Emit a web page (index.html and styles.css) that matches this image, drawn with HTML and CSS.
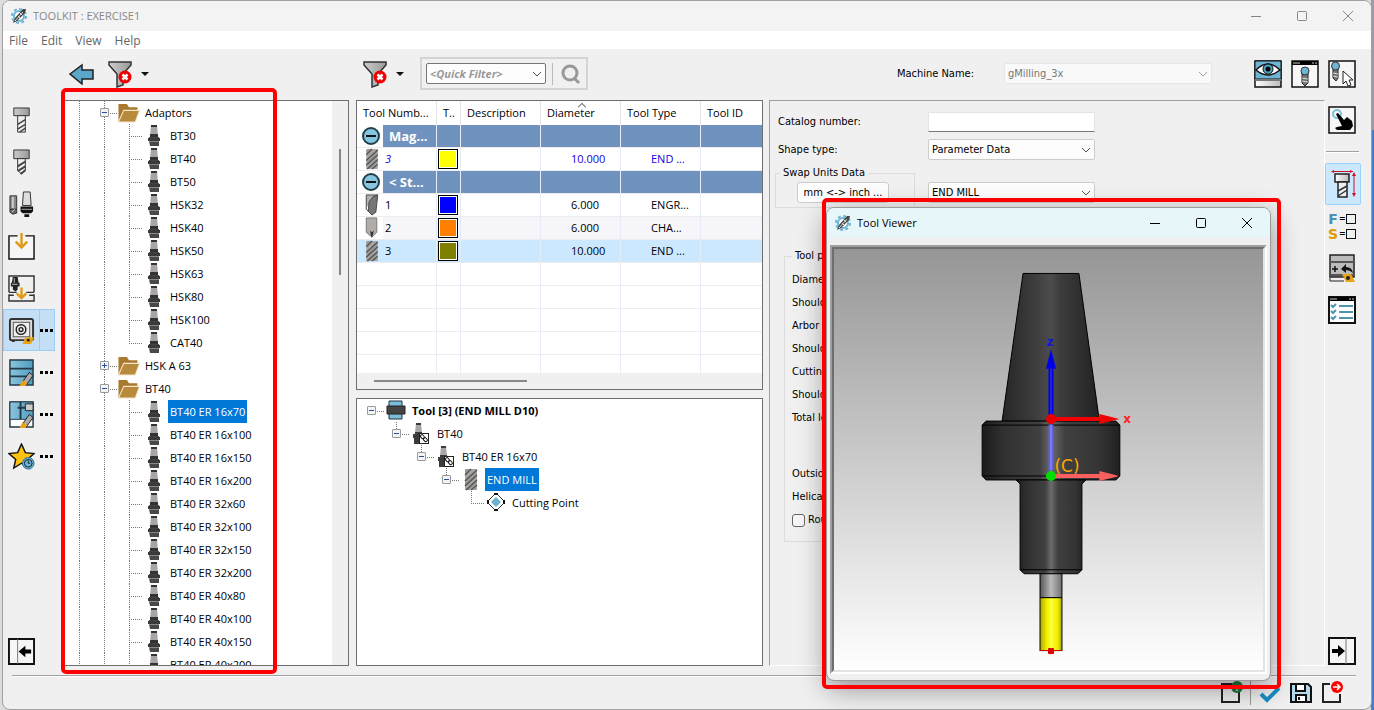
FILE: index.html
```
<!DOCTYPE html>
<html lang="en">
<head>
<meta charset="UTF-8">
<meta name="viewport" content="width=device-width, initial-scale=1.0">
<title>TOOLKIT : EXERCISE1</title>
<link rel="stylesheet" href="styles.css">
</head>
<body>

<!-- shared icons -->
<svg class="sprite" aria-hidden="true">
    <defs>
        <linearGradient id="metal"><stop offset="0" stop-color="#777"/><stop offset=".5" stop-color="#ddd"/><stop offset="1" stop-color="#888"/></linearGradient>
        <linearGradient id="lightMetal"><stop offset="0" stop-color="#ccc"/><stop offset="1" stop-color="#999"/></linearGradient>
        <linearGradient id="whiteMetal"><stop offset="0" stop-color="#fff"/><stop offset="1" stop-color="#bbb"/></linearGradient>
        <linearGradient id="blueFill"><stop offset="0" stop-color="#8cc4dc"/><stop offset="1" stop-color="#4f9dc0"/></linearGradient>
    </defs>
    <symbol id="logo" viewBox="0 0 16 16">
        <circle cx="8" cy="8" r="5" fill="#fff" stroke="#6fb3d2" stroke-width="2"/>
        <circle cx="8" cy="8" r="7" fill="none" stroke="#6fb3d2" stroke-width="2" stroke-dasharray="3 2.5"/>
        <path d="M2 15l2-5 8-9 3 0-1 4-8 8z" fill="#444"/>
        <path d="M4 13l8-9M7 8l2 2M9 5l2 2" stroke="#ddd"/>
    </symbol>
    <symbol id="folder" viewBox="0 0 22 19">
        <path d="M1 18V1h8l2 3h8v4H6z" fill="#a9792f"/>
        <path d="M1 18L6 7h15l-4 11z" fill="#b98a3c" stroke="#f3e6cc"/>
    </symbol>
    <symbol id="adaptor" viewBox="0 0 12 23">
        <path d="M3 1h6l1 11H2z" fill="#aaa5a5"/>
        <path d="M3 1h6v2H3zM2 10h8v3H2z" fill="#333"/>
        <path d="M1 13h10v4H1z" fill="#444"/>
        <path d="M0 14h12v3H0z" fill="#3a3a3a"/>
        <path d="M1 17h10v5H2z" fill="#484848"/>
        <path d="M1 17h10v1H1z" fill="#888"/>
    </symbol>
    <symbol id="adaptorLink" viewBox="0 0 18 23">
        <path d="M4 1h5l1 10H3z" fill="#aaa5a5"/>
        <path d="M4 1h5v2H4zM3 10h7v3H3zM1 12h11v4H1zM2 16h8v6H2z" fill="#3c3c3c"/>
        <rect x="7.500" y="11.500" width="9" height="10" fill="#fff" stroke="#222"/>
        <rect x="9" y="13" width="3" height="4" rx="1" fill="none" stroke="#111" transform="rotate(-40 10 15)"/>
        <rect x="12" y="16" width="3" height="4" rx="1" fill="none" stroke="#111" transform="rotate(-40 13 18)"/>
    </symbol>
    <symbol id="endmill" viewBox="0 0 14 23">
        <path d="M1 1h12v21H1z" fill="#a8a4a2"/>
        <path d="M1 7l6-6M1 13L13 2M1 18L13 7M2 22l11-10M7 22l6-5" stroke="#555" stroke-width="1.500"/>
        <path d="M1 4l3-3M1 16L13 5M4 22l9-8" stroke="#888"/>
    </symbol>
    <symbol id="engraver" viewBox="0 0 14 23">
        <path d="M1 1h12L3 12 1 14z" fill="#b5b0ae"/>
        <path d="M13 1L8 3 4 8 3 18l4 4 4-3 1-9z" fill="#777" stroke="#444"/>
        <path d="M1 1h12M1 1v15l3 3" fill="none" stroke="#444"/>
    </symbol>
    <symbol id="chamfer" viewBox="0 0 14 23">
        <path d="M1 1h11v15l-5 5-6-5z" fill="#b0acaa" stroke="#777"/>
        <path d="M5 14l2 2 2-2-2 8-1-2z" fill="#333"/>
    </symbol>
    <symbol id="collapse" viewBox="0 0 20 20">
        <circle cx="10" cy="10" r="8" fill="#86c5de" stroke="#223f4c" stroke-width="2"/>
        <path d="M5 10h10" stroke="#111" stroke-width="2"/>
    </symbol>
    <symbol id="toolHolder" viewBox="0 0 20 20">
        <path d="M3 1h13v18H3z" fill="#79bdd8" stroke="#234"/>
        <path d="M1 6h18v8H1z" fill="#444" stroke="#222"/>
    </symbol>
    <symbol id="point" viewBox="0 0 20 20">
        <path d="M10 1l9 9-9 9-9-9z" fill="#fff" stroke="#333"/>
        <path d="M10 5l5 5-5 5-5-5z" fill="#6db2cd"/>
        <path d="M8 1h4v2H8zM8 17h4v2H8zM1 8h2v4H1zM17 8h2v4h-2z" fill="#111"/>
    </symbol>
    <symbol id="funnel" viewBox="0 0 26 28">
        <path d="M2 2h22v3l-8 9v11l-6 2V14L2 5z" fill="url(#lightMetal)" stroke="#333" stroke-width="1.500"/>
        <circle cx="18" cy="17" r="6.500" fill="#f00000"/>
        <path d="M15.500 14.500l5 5M20.500 14.500l-5 5" stroke="#fff" stroke-width="2.500"/>
    </symbol>
    <symbol id="milling" viewBox="0 0 26 28">
        <path d="M5 1h16v8H5z" fill="url(#lightMetal)" stroke="#333"/>
        <path d="M9 9h8v17H9z" fill="#eee" stroke="#333"/>
        <path d="M9 18l8-5M9 23l8-5M11 26l6-4" stroke="#444" stroke-width="1.500"/>
    </symbol>
    <symbol id="drill" viewBox="0 0 26 28">
        <path d="M5 1h16v9H5z" fill="url(#lightMetal)" stroke="#333"/>
        <path d="M9 10h8v12l-4 4-4-4z" fill="#eee" stroke="#333"/>
        <path d="M9 18l8-5M9 23l8-5M12 26l5-4" stroke="#444" stroke-width="2"/>
    </symbol>
    <symbol id="holders" viewBox="0 0 26 28">
        <path d="M1 5h7v14H1z" fill="#888" stroke="#333"/>
        <path d="M4 6v12" stroke="#ccc" stroke-width="2"/>
        <path d="M1 19h7v4l-4 1-3-2z" fill="#666" stroke="#333"/>
        <path d="M3 22l3-3" stroke="#ddd"/>
        <path d="M15 1h7l1 14h-9z" fill="#ddd" stroke="#333"/>
        <path d="M12 16h13v5l-2 2h-9l-2-2zM16 24h5v3h-5z" fill="#111"/>
        <path d="M13 19h11" stroke="#aaa"/>
    </symbol>
    <symbol id="importBox" viewBox="0 0 28 28">
        <path d="M10 3H1v24h26V3h-9" fill="#f6f6f6" stroke="#111" stroke-width="1.500"/>
        <path d="M14 0v13M8 9l6 6 6-6" fill="none" stroke="#e09b1a" stroke-width="2.500"/>
    </symbol>
    <symbol id="importAdaptor" viewBox="0 0 28 28">
        <path d="M1 18V1h26v17M1 20v7h26v-7M1 18h8M19 18h8M1 21h5M22 21h5" fill="none" stroke="#333" stroke-width="1.500"/>
        <path d="M5 2h5l1 6H4zM3 8h9v4H3zM5 12h5v3l-2 2-3-2z" fill="#222"/>
        <path d="M6 3h1v5H6zM4 9h6v1H4z" fill="#bbb"/>
        <path d="M14 13v11M9 19l5 5 5-5" fill="none" stroke="#e09b1a" stroke-width="2.500"/>
    </symbol>
    <symbol id="safe" viewBox="0 0 28 28">
        <path d="M4 24h3v2H4zM18 24h4v2h-4z" fill="#333"/>
        <rect x="2" y="2" width="24" height="22" rx="2" fill="#ddd" stroke="#333" stroke-width="2"/>
        <rect x="5.500" y="5.500" width="17" height="15" fill="#eee" stroke="#555"/>
        <circle cx="13.500" cy="13" r="5" fill="none" stroke="#222" stroke-width="1.500"/>
        <circle cx="13.500" cy="13" r="2" fill="none" stroke="#222" stroke-width="1.500"/>
        <path d="M18 21h9l-3 7h-9z" fill="#e8a417"/>
        <circle cx="21" cy="24" r="1.500" fill="#222"/>
    </symbol>
    <symbol id="drawer" viewBox="0 0 28 28">
        <path d="M2 1h24v26H2z" fill="url(#blueFill)" stroke="#223b47" stroke-width="1.500"/>
        <path d="M2 10h24M2 18h24" stroke="#223b47" stroke-width="2"/>
        <path d="M22 14l4 3-7 10-4-3z" fill="#aaa" stroke="#222"/>
        <path d="M15 22l5 3-2 3h-6z" fill="#e8a417"/>
    </symbol>
    <symbol id="cabinet" viewBox="0 0 28 28">
        <path d="M2 1h24v26H2z" fill="#fff" stroke="#223b47" stroke-width="1.500"/>
        <path d="M2 1h24v18H2z" fill="url(#blueFill)" stroke="#223b47"/>
        <path d="M13 1v18M10 7h8" stroke="#223b47" stroke-width="2"/>
        <path d="M18 3h8v7h-8z" fill="#ccc" stroke="#222"/>
        <path d="M22 14l4 3-7 10-4-3z" fill="#aaa" stroke="#222"/>
        <path d="M15 22l5 3-2 3h-6z" fill="#e8a417"/>
    </symbol>
    <symbol id="star" viewBox="0 0 28 28">
        <path d="M14 1l4 9 9 1-7 6 2 9-8-5-8 5 2-9-7-6 9-1z" fill="#ffc20e" stroke="#111" stroke-width="1.500"/>
        <circle cx="21" cy="21" r="6" fill="#6fb3d2" stroke="#2b6f92"/>
        <circle cx="21" cy="21" r="4" fill="none" stroke="#123"/>
        <path d="M21 18v3h2" fill="none" stroke="#123"/>
    </symbol>
    <symbol id="panelLeft" viewBox="0 0 28 28">
        <path d="M1 1h26v26H1z" fill="#f6f6f6" stroke="#111" stroke-width="2"/>
        <path d="M10 1v26" stroke="#777"/>
        <path d="M11 14l7-6v4h6v4h-6v4z"/>
    </symbol>
    <symbol id="panelRight" viewBox="0 0 28 28">
        <path d="M1 1h26v26H1z" fill="#f6f6f6" stroke="#111" stroke-width="2"/>
        <path d="M18 1v26" stroke="#777"/>
        <path d="M17 14l-7-6v4H4v4h6v4z"/>
    </symbol>
    <symbol id="chevron" viewBox="0 0 10 10"><path d="M1 3l4 4 4-4" fill="none" stroke="#555"/></symbol>
    <symbol id="winMin" viewBox="0 0 12 12"><path d="M1 6.500h10" stroke="currentColor"/></symbol>
    <symbol id="winMax" viewBox="0 0 12 12"><rect x="1.500" y="1.500" width="9" height="9" rx="1" fill="none" stroke="currentColor"/></symbol>
    <symbol id="winClose" viewBox="0 0 12 12"><path d="M1 1l10 10M11 1L1 11" stroke="currentColor"/></symbol>
</svg>

<div class="window">
    <header class="titlebar">
        <svg class="logo"><use href="#logo"/></svg>
        <h1>TOOLKIT : EXERCISE1</h1>
        <div class="win-buttons">
            <button aria-label="Minimize"><svg><use href="#winMin"/></svg></button>
            <button aria-label="Maximize"><svg><use href="#winMax"/></svg></button>
            <button aria-label="Close"><svg><use href="#winClose"/></svg></button>
        </div>
    </header>

    <nav class="menubar">
        <a href="#">File</a>
        <a href="#">Edit</a>
        <a href="#">View</a>
        <a href="#">Help</a>
    </nav>

    <div class="toolbar">
        <div class="toolbar-left">
            <button aria-label="Back"><svg width="26" height="22" viewBox="0 0 26 22"><path d="M1 11L13 2v5h11v9H13v5z" fill="#5ba6c9" stroke="#222" stroke-width="1.500"/></svg></button>
            <button aria-label="Clear filter"><svg width="26" height="28"><use href="#funnel"/></svg><i class="caret"></i></button>
        </div>
        <div class="toolbar-middle">
            <button aria-label="Clear filter"><svg width="26" height="28"><use href="#funnel"/></svg><i class="caret"></i></button>
            <div class="quick-filter">
                <div class="select">
                    <select class="filter-select" aria-label="Quick filter"><option>&lt;Quick Filter&gt;</option></select>
                    <svg><use href="#chevron"/></svg>
                </div>
                <button class="search" aria-label="Search"><svg width="22" height="22" viewBox="0 0 22 22"><circle cx="10" cy="10" r="7" fill="none" stroke="#999" stroke-width="3"/><path d="M14 15l5 5" stroke="#999" stroke-width="3"/></svg></button>
            </div>
        </div>
        <div class="toolbar-right">
            <label for="machine">Machine Name:</label>
            <div class="select machine">
                <select id="machine" disabled><option>gMilling_3x</option></select>
                <svg><use href="#chevron"/></svg>
            </div>
            <button aria-label="Show tool"><svg width="28" height="28" viewBox="0 0 28 28">
                <path d="M1 1h26v26H1z" fill="url(#whiteMetal)" stroke="#111" stroke-width="1.500"/>
                <path d="M1 1h26v18H1z" fill="#6eb4d3" stroke="#111"/>
                <path d="M2 10Q14-2 26 10 14 20 2 10z" fill="#fff" stroke="#111" stroke-width="1.500"/>
                <circle cx="14" cy="9" r="5" fill="#4f9dc0" stroke="#111"/><circle cx="14" cy="9" r="2.500"/>
                <path d="M1 20h26" stroke="#777" stroke-width="2"/>
            </svg></button>
            <button aria-label="Tool window"><svg width="28" height="28" viewBox="0 0 28 28">
                <path d="M1 1h26v26H1z" fill="#f6f6f6" stroke="#111" stroke-width="1.500"/>
                <path d="M1 1h26v4H1z"/><path d="M2 3h7M21 3h2M24 3h2" stroke="#ccc"/>
                <path d="M11 13h6v10l-3 3-3-3z" fill="#777" stroke="#222"/>
                <circle cx="14" cy="11" r="4" fill="#6eb4d3" stroke="#333"/>
                <path d="M11 18l6 1M11 21l6 1" stroke="#ddd"/>
            </svg></button>
            <button aria-label="Pick tool"><svg width="28" height="28" viewBox="0 0 28 28">
                <path d="M1 1h26v26H1z" fill="#f6f6f6" stroke="#111" stroke-width="1.500"/>
                <path d="M5 8h5v10l-2 3-3-3z" fill="#777" stroke="#222"/>
                <circle cx="7.500" cy="6" r="4" fill="#6eb4d3" stroke="#333"/>
                <path d="M5 13l5 1M5 16l5 1" stroke="#ddd"/>
                <path d="M15 11v13l3-3 2 5 3-1-2-5h4z" fill="#fff" stroke="#222"/>
            </svg></button>
        </div>
    </div>

    <main class="workspace">
        <aside class="sidebar">
            <button aria-label="Milling tools"><svg><use href="#milling"/></svg></button>
            <button aria-label="Drilling tools"><svg><use href="#drill"/></svg></button>
            <button aria-label="Holders"><svg><use href="#holders"/></svg></button>
            <button aria-label="Import"><svg><use href="#importBox"/></svg></button>
            <button aria-label="Import adaptor"><svg><use href="#importAdaptor"/></svg></button>
            <button class="active" aria-label="Tool vault"><svg><use href="#safe"/></svg><i class="dots"></i></button>
            <button aria-label="Drawer"><svg><use href="#drawer"/></svg><i class="dots"></i></button>
            <button aria-label="Cabinet"><svg><use href="#cabinet"/></svg><i class="dots"></i></button>
            <button aria-label="Favorites"><svg><use href="#star"/></svg><i class="dots"></i></button>
            <button class="to-bottom" aria-label="Hide panel"><svg><use href="#panelLeft"/></svg></button>
        </aside>

        <section class="panel library">
            <ul class="tree">
                <li><i class="line"></i><i class="line"><b class="box minus"></b></i><svg class="folder"><use href="#folder"/></svg><span>Adaptors</span></li>
                <li><i class="line"></i><i class="line"></i><i class="line leaf"></i><svg><use href="#adaptor"/></svg><span>BT30</span></li>
                <li><i class="line"></i><i class="line"></i><i class="line leaf"></i><svg><use href="#adaptor"/></svg><span>BT40</span></li>
                <li><i class="line"></i><i class="line"></i><i class="line leaf"></i><svg><use href="#adaptor"/></svg><span>BT50</span></li>
                <li><i class="line"></i><i class="line"></i><i class="line leaf"></i><svg><use href="#adaptor"/></svg><span>HSK32</span></li>
                <li><i class="line"></i><i class="line"></i><i class="line leaf"></i><svg><use href="#adaptor"/></svg><span>HSK40</span></li>
                <li><i class="line"></i><i class="line"></i><i class="line leaf"></i><svg><use href="#adaptor"/></svg><span>HSK50</span></li>
                <li><i class="line"></i><i class="line"></i><i class="line leaf"></i><svg><use href="#adaptor"/></svg><span>HSK63</span></li>
                <li><i class="line"></i><i class="line"></i><i class="line leaf"></i><svg><use href="#adaptor"/></svg><span>HSK80</span></li>
                <li><i class="line"></i><i class="line"></i><i class="line leaf"></i><svg><use href="#adaptor"/></svg><span>HSK100</span></li>
                <li><i class="line"></i><i class="line"></i><i class="line leaf last"></i><svg><use href="#adaptor"/></svg><span>CAT40</span></li>
                <li><i class="line"></i><i class="line"><b class="box plus"></b></i><svg class="folder"><use href="#folder"/></svg><span>HSK A 63</span></li>
                <li><i class="line"></i><i class="line"><b class="box minus"></b></i><svg class="folder"><use href="#folder"/></svg><span>BT40</span></li>
                <li><i class="line"></i><i class="line"></i><i class="line leaf"></i><svg><use href="#adaptor"/></svg><span class="selected">BT40 ER 16x70</span></li>
                <li><i class="line"></i><i class="line"></i><i class="line leaf"></i><svg><use href="#adaptor"/></svg><span>BT40 ER 16x100</span></li>
                <li><i class="line"></i><i class="line"></i><i class="line leaf"></i><svg><use href="#adaptor"/></svg><span>BT40 ER 16x150</span></li>
                <li><i class="line"></i><i class="line"></i><i class="line leaf"></i><svg><use href="#adaptor"/></svg><span>BT40 ER 16x200</span></li>
                <li><i class="line"></i><i class="line"></i><i class="line leaf"></i><svg><use href="#adaptor"/></svg><span>BT40 ER 32x60</span></li>
                <li><i class="line"></i><i class="line"></i><i class="line leaf"></i><svg><use href="#adaptor"/></svg><span>BT40 ER 32x100</span></li>
                <li><i class="line"></i><i class="line"></i><i class="line leaf"></i><svg><use href="#adaptor"/></svg><span>BT40 ER 32x150</span></li>
                <li><i class="line"></i><i class="line"></i><i class="line leaf"></i><svg><use href="#adaptor"/></svg><span>BT40 ER 32x200</span></li>
                <li><i class="line"></i><i class="line"></i><i class="line leaf"></i><svg><use href="#adaptor"/></svg><span>BT40 ER 40x80</span></li>
                <li><i class="line"></i><i class="line"></i><i class="line leaf"></i><svg><use href="#adaptor"/></svg><span>BT40 ER 40x100</span></li>
                <li><i class="line"></i><i class="line"></i><i class="line leaf"></i><svg><use href="#adaptor"/></svg><span>BT40 ER 40x150</span></li>
                <li><i class="line"></i><i class="line"></i><i class="line leaf"></i><svg><use href="#adaptor"/></svg><span>BT40 ER 40x200</span></li>
            </ul>
            <div class="scroll-y"><i></i></div>
        </section>

        <div class="middle">
            <section class="panel tools">
                <div class="table-wrap">
                    <table>
                        <thead>
                            <tr>
                                <th class="c-num">Tool Numb...</th>
                                <th class="c-color">T..</th>
                                <th class="c-col">Description</th>
                                <th class="c-col sorted">Diameter</th>
                                <th class="c-col">Tool Type</th>
                                <th>Tool ID</th>
                            </tr>
                        </thead>
                        <tbody>
                            <tr class="group"><td class="num"><div><svg><use href="#collapse"/></svg><span>Mag...</span></div></td><td></td><td></td><td></td><td></td><td></td></tr>
                            <tr class="mounted"><td class="num"><div><svg><use href="#endmill"/></svg><em>3</em></div></td><td><i class="swatch yellow"></i></td><td></td><td class="dia">10.000</td><td class="type">END ...</td><td></td></tr>
                            <tr class="group"><td class="num"><div><svg><use href="#collapse"/></svg><span>&lt; St...</span></div></td><td></td><td></td><td></td><td></td><td></td></tr>
                            <tr><td class="num"><div><svg><use href="#engraver"/></svg><span>1</span></div></td><td><i class="swatch blue"></i></td><td></td><td class="dia">6.000</td><td class="type">ENGR...</td><td></td></tr>
                            <tr class="alt"><td class="num"><div><svg><use href="#chamfer"/></svg><span>2</span></div></td><td><i class="swatch orange"></i></td><td></td><td class="dia">6.000</td><td class="type">CHA...</td><td></td></tr>
                            <tr class="current"><td class="num"><div><svg><use href="#endmill"/></svg><span>3</span></div></td><td><i class="swatch olive"></i></td><td></td><td class="dia">10.000</td><td class="type">END ...</td><td></td></tr>
                            <tr><td></td><td></td><td></td><td></td><td></td><td></td></tr>
                            <tr><td></td><td></td><td></td><td></td><td></td><td></td></tr>
                            <tr><td></td><td></td><td></td><td></td><td></td><td></td></tr>
                            <tr><td></td><td></td><td></td><td></td><td></td><td></td></tr>
                            <tr><td></td><td></td><td></td><td></td><td></td><td></td></tr>
                        </tbody>
                    </table>
                </div>
                <div class="scroll-x"><i></i></div>
            </section>

            <section class="panel assembly">
                <ul class="tree">
                    <li><i class="line root"><b class="box minus"></b></i><svg class="holder"><use href="#toolHolder"/></svg><strong>Tool [3] (END MILL D10)</strong></li>
                    <li><i class="line blank"></i><i class="line end"><b class="box minus"></b></i><svg><use href="#adaptorLink"/></svg><span>BT40</span></li>
                    <li><i class="line blank"></i><i class="line blank"></i><i class="line end"><b class="box minus"></b></i><svg><use href="#adaptorLink"/></svg><span>BT40 ER 16x70</span></li>
                    <li><i class="line blank"></i><i class="line blank"></i><i class="line blank"></i><i class="line end"><b class="box minus"></b></i><svg><use href="#endmill"/></svg><span class="selected">END MILL</span></li>
                    <li><i class="line blank"></i><i class="line blank"></i><i class="line blank"></i><i class="line blank"></i><i class="line leaf last"></i><svg class="holder"><use href="#point"/></svg><span>Cutting Point</span></li>
                </ul>
            </section>
        </div>

        <form class="details">
            <div class="row">
                <label for="catalog">Catalog number:</label>
                <input type="text" id="catalog">
            </div>
            <div class="row">
                <label for="shape">Shape type:</label>
                <div class="select">
                    <select id="shape"><option>Parameter Data</option></select>
                    <svg><use href="#chevron"/></svg>
                </div>
            </div>
            <div class="row units">
                <fieldset>
                    <legend>Swap Units Data</legend>
                    <button type="button">mm &lt;-&gt; inch ...</button>
                </fieldset>
                <div class="select">
                    <select aria-label="Tool type"><option>END MILL</option></select>
                    <svg><use href="#chevron"/></svg>
                </div>
            </div>
            <fieldset class="params">
                <legend>Tool parameters</legend>
                <p>Diameter</p>
                <p>Shoulder</p>
                <p>Arbor diameter</p>
                <p>Shoulder</p>
                <p>Cutting</p>
                <p>Shoulder</p>
                <p>Total length</p>
                <p class="spaced">Outside</p>
                <p>Helical angle</p>
                <label class="check"><input type="checkbox"> Rough</label>
            </fieldset>
        </form>

        <aside class="rail">
            <button aria-label="Touch"><svg viewBox="0 0 28 28">
                <path d="M1 1h26v26H1z" fill="#f6f6f6" stroke="#111" stroke-width="1.500"/>
                <circle cx="9" cy="8" r="4" fill="none" stroke="#7cc0dc" stroke-width="2"/>
                <path d="M8 8l2-1 6 7 3-3 5 4 1 5-3 4H9l-2-2 2-1 5-1z"/>
            </svg></button>
            <hr>
            <button class="active" aria-label="Geometry"><svg viewBox="0 0 28 28">
                <path d="M7 4h14v8H7z" fill="url(#whiteMetal)" stroke="#222" stroke-width="1.500"/>
                <path d="M10 12h9v15h-9z" fill="#eee" stroke="#222" stroke-width="1.500"/>
                <path d="M10 21l9-5M10 26l9-6" stroke="#333" stroke-width="1.500"/>
                <path d="M4 1.500h21M26 4v21" fill="none" stroke="#cc1122"/>
                <path d="M3 1.500l3-1.500v3zM25 1.500L22 0v3zM26 2l2 4h-4zM26 27l2-4h-4z" fill="#cc1122"/>
            </svg></button>
            <button aria-label="Feed and spin">
                <span class="fs"><b class="f">F</b><span>=</span><i></i><b class="s">S</b><span>=</span><i></i></span>
            </button>
            <button aria-label="Holder"><svg viewBox="0 0 28 28">
                <path d="M2 1h24v22H2z" fill="#bbb" stroke="#222" stroke-width="1.500"/>
                <path d="M2 8h24M2 21h24" stroke="#555" stroke-width="2"/>
                <path d="M4 15h6M7 12v6" stroke="#111" stroke-width="1.500"/>
                <path d="M25 19q-1-6-7-6v-3l-5 5 5 4v-3q4 0 7 3z" fill="#111"/>
                <path d="M2 24v3h14" fill="none" stroke="#222"/>
                <path d="M14 20h9l4 8h-9z" fill="#e8a417"/><circle cx="20" cy="24" r="2" fill="#222"/>
            </svg></button>
            <button aria-label="Check list"><svg viewBox="0 0 28 28">
                <path d="M1 1h26v26H1z" fill="#fff" stroke="#111" stroke-width="2"/>
                <path d="M1 1h26v4H1z"/><path d="M2 3h7M21 3h2M24 3h2" stroke="#ccc"/>
                <path d="M11 10h14M11 16h14M11 22h14M3 9l2 2 3-3M3 15l2 2 3-3M3 21l2 2 3-3" fill="none" stroke="#4f94b0" stroke-width="2"/>
            </svg></button>
            <button class="to-bottom" aria-label="Hide panel"><svg><use href="#panelRight"/></svg></button>
        </aside>
    </main>

    <footer class="statusbar">
        <button aria-label="New"><svg viewBox="0 0 24 24"><path d="M13 3H3v18h17V11" fill="none" stroke="#222" stroke-width="2"/><circle cx="18" cy="6" r="6" fill="#1c7a3c"/><path d="M18 10V4l-2 2M18 4l2 2" stroke="#fff" fill="none"/></svg></button>
        <i class="divider"></i>
        <button aria-label="Apply"><svg viewBox="0 0 24 24"><path d="M3 13l6 6L21 7" fill="none" stroke="#1a8fc4" stroke-width="4"/></svg></button>
        <button aria-label="Save"><svg viewBox="0 0 24 24"><path d="M2 3h17l3 3v15H2z" fill="#b5dbea" stroke="#111" stroke-width="2"/><path d="M7 3h9v7H7zM7 14h10v7H7z" fill="#fff" stroke="#111" stroke-width="2"/><path d="M10 16v3" stroke="#111" stroke-width="2"/></svg></button>
        <button aria-label="Exit"><svg viewBox="0 0 24 24"><path d="M10 3H3v18h17V13" fill="none" stroke="#222" stroke-width="2"/><circle cx="17" cy="6" r="6" fill="#f00"/><path d="M13 6h7M17 3l3 3-3 3" stroke="#fff" stroke-width="1.500" fill="none"/></svg></button>
    </footer>
</div>

<section class="viewer">
    <header class="titlebar">
        <svg class="logo"><use href="#logo"/></svg>
        <h2>Tool Viewer</h2>
        <div class="win-buttons">
            <button aria-label="Minimize"><svg><use href="#winMin"/></svg></button>
            <button aria-label="Maximize"><svg><use href="#winMax"/></svg></button>
            <button aria-label="Close"><svg><use href="#winClose"/></svg></button>
        </div>
    </header>
    <div class="canvas">
        <svg viewBox="0 0 430 422">
            <defs>
                <linearGradient id="steel"><stop offset="0" stop-color="#1c1c1c"/><stop offset=".15" stop-color="#303030"/><stop offset=".42" stop-color="#404040"/><stop offset=".5" stop-color="#6c6c6c"/><stop offset=".6" stop-color="#404040"/><stop offset=".85" stop-color="#343434"/><stop offset="1" stop-color="#202020"/></linearGradient>
                <linearGradient id="cone"><stop offset="0" stop-color="#262626"/><stop offset=".3" stop-color="#3a3a3a"/><stop offset=".5" stop-color="#4c4c4c"/><stop offset=".6" stop-color="#3c3c3c"/><stop offset="1" stop-color="#222"/></linearGradient>
                <linearGradient id="shank"><stop offset="0" stop-color="#555"/><stop offset=".5" stop-color="#bbb"/><stop offset="1" stop-color="#707070"/></linearGradient>
                <linearGradient id="cutter"><stop offset="0" stop-color="#a8a800"/><stop offset=".3" stop-color="#ee0"/><stop offset=".5" stop-color="#ffff3c"/><stop offset=".8" stop-color="#ee0"/><stop offset="1" stop-color="#a8a800"/></linearGradient>
            </defs>
            <!-- holder -->
            <g stroke="#000">
                <path d="M189.500 24.500h56L266 172.500h-97.500z" fill="url(#cone)"/>
                <path d="M152.500 172.500h130l4 4v51l-4 4h-130l-4-4v-51z" fill="url(#steel)"/>
                <path d="M148.500 176.500h138M148.500 227.500h138"/>
                <path d="M182.500 231.500h70l-4 4v86l-4 4h-54l-4-4v-86z" fill="url(#steel)"/>
                <path d="M186.500 321.500h62"/>
                <path d="M206.500 325.500h22v24h-22z" fill="url(#shank)"/>
                <path d="M206.500 349.500h22v53h-22z" fill="url(#cutter)"/>
            </g>
            <!-- axes -->
            <path d="M217.500 176v46" stroke="#6060e0" stroke-width="5"/>
            <path d="M217.500 176v46" stroke="#9a9aff"/>
            <path d="M217.500 120v48" stroke="#0000d8" stroke-width="5"/>
            <path d="M217.500 120v48" stroke="#4040ff"/>
            <path d="M217.500 100l5 20h-10z" fill="#0000e6"/>
            <path d="M220 170.500h48" stroke="#f00000" stroke-width="4"/>
            <path d="M266 165.500l20 5-20 5z" fill="#f00000"/>
            <path d="M220 227.500h48" stroke="#f86060" stroke-width="4"/>
            <path d="M266 222.500l20 5-20 5z" fill="#f86060"/>
            <circle cx="217.500" cy="170.500" r="5" fill="#e60000"/>
            <circle cx="217.500" cy="227.500" r="5" fill="#00e000"/>
            <path d="M206 402.500h23M215 400.500h5v5h-5z" fill="#d00" stroke="#d00"/>
            <text x="213" y="97" class="axis z">z</text>
            <text x="290" y="174" class="axis x">x</text>
            <text x="221" y="224" class="origin">(C)</text>
        </svg>
    </div>
</section>

<div class="highlight on-library"></div>
<div class="highlight on-viewer"></div>

</body>
</html>
```
FILE: styles.css
```
* {
    box-sizing: border-box;
}

body {
    margin: 0;
    height: 100vh;
    padding: 0 2px;
    overflow: hidden;
    position: relative;
    background: linear-gradient(#9c9ca6 0 130px, #3f7fca 130px) right / 3px 100% no-repeat, #dcdcdc;
    font-family: "Open Sans", "Noto Sans", sans-serif;
    font-size: 11px;
    line-height: 16px;
    color: #000;
}

h1, h2, ul, p, fieldset {
    margin: 0;
    padding: 0;
}

button {
    display: flex;
    align-items: center;
    justify-content: center;
    padding: 0;
    border: none;
    background: none;
    font: inherit;
    color: inherit;
}

i {
    font-style: normal;
}

.sprite {
    position: absolute;
    width: 0;
    height: 0;
}

.window {
    display: flex;
    flex-direction: column;
    height: 100%;
    background: #f0f0f0;
    border: 1px solid #a0a0a0;
    border-radius: 8px;
    overflow: hidden;
}

/* title bars */
.titlebar {
    display: flex;
    align-items: center;
    height: 30px;
    flex: none;
    padding-left: 8px;
    gap: 6px;
    background: #f3f3f3;
    color: #888;
}

.titlebar h1, .titlebar h2 {
    font-size: 11px;
    font-weight: normal;
}

.logo {
    width: 16px;
    height: 16px;
}

.win-buttons {
    display: flex;
    margin-left: auto;
}

.win-buttons button {
    width: 46px;
    height: 30px;
}

.win-buttons svg {
    width: 12px;
    height: 12px;
}

.menubar {
    display: flex;
    flex: none;
    gap: 13px;
    height: 18px;
    padding-left: 6px;
    background: #fff;
}

.menubar a {
    color: #666;
    font-size: 12px;
    line-height: 20px;
    text-decoration: none;
}

/* toolbar */
.toolbar {
    display: flex;
    flex: none;
    height: 51px;
    padding: 0 15px 2px 0;
}

.toolbar-left {
    display: flex;
    align-items: center;
    gap: 12px;
    width: 359px;
    padding-left: 66px;
    flex: none;
}

.toolbar-middle {
    display: flex;
    align-items: center;
    gap: 16px;
}

.caret {
    margin-left: 8px;
    border: 4px solid transparent;
    border-top-color: #111;
    border-bottom: none;
}

.quick-filter {
    display: flex;
    align-items: center;
    width: 168px;
    height: 33px;
    padding-left: 4px;
    border: 2px solid #d4d4d4;
}

.quick-filter .select {
    width: 120px;
    margin-right: 6px;
}

.search {
    height: 22px;
    padding-left: 7px;
    border-left: 1px solid #bbb;
}

.toolbar-right {
    display: flex;
    align-items: center;
    margin-left: auto;
    gap: 9px;
}

.machine {
    width: 208px;
    margin: 0 33px 0 21px;
}

.toolbar-right, .details {
    font-family: "DejaVu Sans Condensed", "DejaVu Sans", sans-serif;
    font-size: 11px;
}

/* drop-downs */
.select {
    display: grid;
    align-items: center;
}

.select select {
    grid-area: 1 / 1;
    appearance: none;
    width: 100%;
    height: 21px;
    padding: 0 3px;
    border: 1px solid #ccc;
    border-radius: 2px;
    background: #fdfdfd;
    font: inherit;
    color: #000;
}

.select select:disabled {
    border-color: #e6e6e6;
    background: #f9f9f9;
    color: #777;
    opacity: 1;
}

.select select:disabled + svg {
    opacity: .5;
}

.select svg {
    grid-area: 1 / 1;
    justify-self: end;
    width: 10px;
    height: 10px;
    margin-right: 4px;
    pointer-events: none;
}

.select .filter-select {
    border-color: #777;
    font-size: 11px;
    font-style: italic;
    font-weight: bold;
    color: #999;
}

/* workspace */
.workspace {
    display: flex;
    flex: 1;
    min-height: 0;
}

.sidebar {
    display: flex;
    flex-direction: column;
    width: 61px;
    flex: none;
    margin-top: -1px;
}

.sidebar button {
    justify-content: flex-start;
    width: 52px;
    height: 42px;
    padding-left: 5px;
}

.sidebar svg {
    width: 27px;
    height: 27px;
}

.sidebar .active {
    background: linear-gradient(#99cdf5, #99cdf5) 35px 0 / 1px 100% no-repeat, #c4def5;
    border: 1px solid #99cdf5;
    padding-left: 4px;
}

.dots {
    width: 13px;
    height: 3px;
    margin-left: 5px;
    background: repeating-linear-gradient(90deg, #000 0 3px, transparent 3px 5px);
}

.sidebar .to-bottom, .rail .to-bottom {
    margin-top: auto;
    margin-bottom: -6px;
}

.panel {
    border: 1px solid #6e6e6e;
    background: #fff;
    overflow: hidden;
}

.library {
    display: flex;
    width: 285px;
    flex: none;
    margin-right: 7px;
}

.tree {
    flex: 1;
    padding-left: 2px;
    list-style: none;
}

.tree li {
    display: flex;
    align-items: center;
    height: 23px;
    white-space: nowrap;
}

.tree svg {
    width: 26px;
    height: 23px;
    padding-right: 2px;
}

.tree .folder, .tree .holder {
    height: 20px;
}

.tree span, .tree strong {
    padding: 0 2px;
    line-height: 23px;
}

.tree .selected {
    background: #0078d7;
    color: #fff;
}

.line {
    display: flex;
    align-items: center;
    justify-content: center;
    width: 25px;
    height: 23px;
    background: repeating-linear-gradient(#777 0 1px, transparent 1px 2px) 12px 0 / 1px 100% no-repeat;
}

.line.leaf, .line:has(.box) {
    background:
        repeating-linear-gradient(#777 0 1px, transparent 1px 2px) 12px 0 / 1px 100% no-repeat,
        repeating-linear-gradient(90deg, #777 0 1px, transparent 1px 2px) 12px 12px / 13px 1px no-repeat;
}

.line.last, .line.end:has(.box) {
    background:
        repeating-linear-gradient(#777 0 1px, transparent 1px 2px) 12px 0 / 1px 12px no-repeat,
        repeating-linear-gradient(90deg, #777 0 1px, transparent 1px 2px) 12px 12px / 13px 1px no-repeat;
}

.line.root:has(.box) {
    background: repeating-linear-gradient(90deg, #777 0 1px, transparent 1px 2px) 12px 12px / 13px 1px no-repeat;
}

.line.blank {
    background: none;
}

.box {
    width: 9px;
    height: 9px;
    border: 1px solid #999;
    border-radius: 1px;
}

.minus {
    background: linear-gradient(#2b4fa0, #2b4fa0) center / 5px 1px no-repeat, #f4f4f4;
}

.plus {
    background:
        linear-gradient(#2b4fa0, #2b4fa0) center / 5px 1px no-repeat,
        linear-gradient(#2b4fa0, #2b4fa0) center / 1px 5px no-repeat,
        #f4f4f4;
}

.scroll-y {
    width: 16px;
    padding: 48px 0 0 7px;
    background: #f0f0f0;
}

.scroll-y i {
    display: block;
    width: 2px;
    height: 126px;
    background: #888;
}

/* tool table */
.middle {
    display: flex;
    flex-direction: column;
    gap: 8px;
    width: 407px;
    flex: none;
    margin-right: 6px;
}

.tools {
    display: flex;
    flex-direction: column;
    flex: 290 1 0;
}

.table-wrap {
    flex: 1;
    min-height: 0;
    overflow: hidden;
}

table {
    width: 100%;
    table-layout: fixed;
    border-collapse: separate;
    border-spacing: 0;
}

th {
    height: 24px;
    padding: 0 0 0 6px;
    border-right: 1px solid #e2e2e2;
    font-weight: normal;
    text-align: left;
    white-space: nowrap;
}

td {
    height: 23px;
    padding: 0;
    border-right: 1px solid #e6edf8;
    border-bottom: 1px solid #ececec;
}

th:last-child, td:last-child {
    border-right: none;
}

.c-num, .c-col {
    width: 80px;
}

.c-color {
    width: 24px;
}

.sorted {
    position: relative;
}

.sorted::after {
    content: "";
    position: absolute;
    top: 3px;
    left: 38px;
    width: 5px;
    height: 5px;
    border: solid #777;
    border-width: 1px 0 0 1px;
    transform: rotate(45deg);
}

.num div {
    display: flex;
    align-items: center;
}

.num svg {
    width: 26px;
    height: 22px;
    padding-left: 4px;
    background: #fff;
    flex: none;
}

.group .num svg {
    padding: 1px 2px 1px 4px;
}

.num span, .num em {
    flex: 1;
    padding-left: 2px;
    line-height: 22px;
}

.group td:not(.num), .group span {
    background: #7092be;
}

.group .num span {
    padding-left: 6px;
    font-size: 13px;
    font-weight: bold;
    color: #fff;
    white-space: pre;
}

.mounted {
    color: #1400e0;
}

.alt td {
    background: #f5f5fa;
}

.current td {
    background: #cce8ff;
}

.current svg {
    background: none;
}

.dia {
    padding-left: 30px;
}

.type {
    padding-left: 30px;
}

.swatch {
    display: block;
    width: 20px;
    height: 20px;
    margin-left: 1px;
    border: 1px solid #000;
    box-shadow: inset 0 0 0 1px #fff;
}

.yellow { background: #ffff00; }
.blue { background: #0000ff; }
.orange { background: #ff8000; }
.olive { background: #808000; }

.scroll-x {
    height: 16px;
    padding: 7px 0 0 17px;
    background: #f0f0f0;
}

.scroll-x i {
    display: block;
    width: 153px;
    height: 2px;
    background: #888;
}

.assembly {
    flex: 268 1 0;
}

/* details form */
.details {
    flex: 1;
    min-width: 0;
    padding: 10px 0 0 8px;
    border: 1px solid #a0a0a0;
    border-right-color: #fff;
    border-bottom-color: #fff;
}

.row {
    display: flex;
    align-items: center;
    height: 21px;
    margin-bottom: 7px;
}

.row > label, .row > fieldset {
    width: 150px;
    flex: none;
}

.row input[type="text"], .row .select {
    width: 167px;
}

.row input[type="text"] {
    height: 20px;
    border: 1px solid #e4e4e4;
    border-bottom-color: #777;
    background: #fff;
}

fieldset {
    border: 1px solid #dcdcdc;
    min-width: 0;
}

legend {
    padding: 0 3px;
    margin-left: 4px;
    line-height: 16px;
}

.units {
    align-items: flex-start;
    height: 44px;
    margin-bottom: 37px;
}

.row.units > fieldset {
    width: 140px;
    height: 43px;
    margin: -2px 13px 0 -3px;
}

.units fieldset button {
    width: 92px;
    height: 21px;
    margin: 1px 0 0 21px;
    border: 1px solid #ccc;
    border-radius: 3px;
    background: #fdfdfd;
}

.units .select {
    margin-top: 15px;
}

.params {
    width: 460px;
    height: 294px;
    margin-left: 6px;
    padding: 4px 0 0 7px;
}

.params legend {
    margin-left: 0;
}

.params p {
    height: 23px;
    line-height: 23px;
}

.params .spaced {
    margin-top: 33px;
}

.check {
    display: flex;
    align-items: center;
    gap: 3px;
    height: 24px;
}

.check input {
    appearance: none;
    width: 13px;
    height: 13px;
    margin: 0;
    border: 1px solid #666;
    border-radius: 3px;
    background: #f6f6f6;
}

.rail {
    display: flex;
    flex-direction: column;
    width: 46px;
    flex: none;
    margin-top: -1px;
}

.rail button {
    width: 36px;
    height: 42px;
    padding-right: 2px;
}

.rail svg {
    width: 28px;
    height: 28px;
}

.rail .active {
    border: 1px solid #99d1ff;
    border-radius: 2px;
    background: #cce8ff;
}

.rail hr {
    width: 33px;
    margin: 10px 0 11px 1px;
    border: solid #a0a0a0;
    border-width: 1px 0 0;
    box-shadow: 0 1px #fff;
}

.fs {
    display: grid;
    grid-template-columns: 10px 6px 10px;
    align-items: center;
    gap: 1px;
    font-family: "DejaVu Sans", sans-serif;
    line-height: 14px;
    font-weight: bold;
}

.fs b {
    font-size: 14px;
}

.fs span {
    font-size: 8px;
}

.fs i {
    width: 10px;
    height: 10px;
    border: 1px solid #111;
}

.f { color: #4f8fb0; }
.s { color: #e09b00; }

/* status bar */
.statusbar {
    display: flex;
    align-items: center;
    justify-content: flex-end;
    flex: none;
    gap: 7px;
    height: 34px;
    margin: 9px 15px 0 9px;
    padding-right: 12px;
    border-top: 1px solid #a0a0a0;
    box-shadow: inset 0 1px #fff;
}

.statusbar svg {
    width: 24px;
    height: 24px;
}

.divider {
    width: 1px;
    height: 25px;
    background: #999;
}

/* floating viewer window */
.viewer {
    position: absolute;
    top: 207px;
    right: 103px;
    width: 445px;
    border: 1px solid #9a9a9a;
    border-radius: 8px;
    overflow: hidden;
    background: #f0f0f0;
    box-shadow: 0 8px 28px rgba(0, 0, 0, .4);
}

.viewer .titlebar {
    background: #e6f6f9;
    color: #000;
}

.canvas {
    margin: 7px 3px 6px;
    border: 2px solid #a0a0a0;
    border-right-color: #fff;
    border-bottom-color: #fff;
}

.canvas svg {
    display: block;
    width: 100%;
    border: 2px solid #6e6e6e;
    border-right-color: #e3e3e3;
    border-bottom-color: #e3e3e3;
    background: linear-gradient(#969696, #fff);
}

.axis {
    font-family: "DejaVu Sans", sans-serif;
    font-size: 12px;
    font-weight: bold;
}

.z { fill: #1414e0; }
.x { fill: #ff2020; }

.origin {
    font-family: "DejaVu Sans", sans-serif;
    font-size: 17px;
    fill: #ffa500;
}

/* red markers */
.highlight {
    position: absolute;
    border: 4px solid #ff0000;
    border-radius: 5px;
    pointer-events: none;
}

.on-library {
    top: 88px;
    left: 61px;
    width: 216px;
    height: 586px;
}

.on-viewer {
    top: 198px;
    right: 93px;
    width: 459px;
    height: 491px;
}
```
